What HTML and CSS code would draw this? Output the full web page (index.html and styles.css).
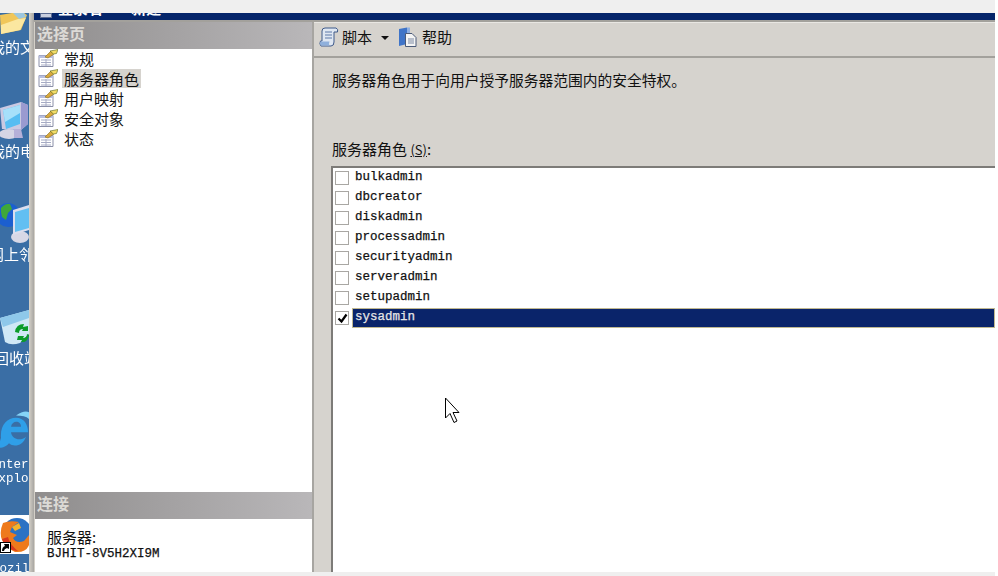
FILE: index.html
```html
<!DOCTYPE html>
<html lang="zh-CN">

<head>
    <meta charset="UTF-8">
    <title>登录名 - 新建</title>
    <link rel="stylesheet" href="styles.css">
</head>

<body>
    <svg width="0" height="0" class="defs">
        <symbol id="page-icon" viewBox="0 0 20 18">
            <path d="M1 6.500h14v11H1z" fill="#fff" stroke="#8a8fa8"/>
            <path d="M1 6.500h14v2.500H1z" fill="#b9bfe0"/>
            <path d="M3 11h10M3 13.500h10M3 16h10M8 10v7" stroke="#a6abc4" fill="none"/>
            <path d="M7 8l6-6 3 3-6 4z" fill="#d8a83c" stroke="#8a6d20" stroke-width=".6"/>
            <path d="M12 2l8-1.500-1.500 4-3 .500z" fill="#f3dc66" stroke="#55651f" stroke-width=".6"/>
        </symbol>
    </svg>

    <div class="top-strip"></div>

    <div class="screen">
        <div class="desktop">
            <svg class="desk-icon folder-icon" width="29" height="21" viewBox="0 0 29 21">
                <path d="M0 2L12 0h12l3 2-6 15L1 21z" fill="#f0c659"/>
                <path d="M1 12l17-6 8-1-6 12L1 21z" fill="#fbe7a0"/>
                <path d="M13 0h11l2 4-7 2z" fill="#9cc7df"/>
            </svg>
            <div class="desk-label label-docs">我的文档</div>

            <svg class="desk-icon pc-icon" width="29" height="42" viewBox="0 0 29 42">
                <ellipse cx="9" cy="33" rx="10" ry="5" fill="#d5d5e4"/>
                <path d="M0 7L21 1l7 3v19l-7 6L2 28z" fill="#c9c9e2"/>
                <path d="M3 9l17-5v19L6 28z" fill="#56bdf2"/>
                <path d="M3 9l17-5v8L5 21z" fill="#a6e0fa"/>
                <path d="M21 1l7 3v19l-7 6z" fill="#9a9ad0"/>
                <path d="M14 28h7l2 9h-9z" fill="#b5b0d8"/>
            </svg>
            <div class="desk-label label-pc">我的电脑</div>

            <svg class="desk-icon net-icon" width="29" height="42" viewBox="0 0 29 42">
                <circle cx="8" cy="13" r="12" fill="#1c5fd0"/>
                <path d="M1 6q5-5 9-4l2 5-4 4-2 7-4-3-1-5z" fill="#3fa83a"/>
                <ellipse cx="20" cy="35" rx="9" ry="6" fill="#d8d8e6"/>
                <path d="M13 8l16-5v25l-16 5z" fill="#dcdeee"/>
                <path d="M15 10l14-4v20l-14 4z" fill="#62bff2"/>
            </svg>
            <div class="desk-label label-net">网上邻居</div>

            <svg class="desk-icon bin-icon" width="29" height="36" viewBox="0 0 29 36">
                <path d="M0 8L29 0v24l-9 9q-9 3-15-1z" fill="#cfe8f6"/>
                <path d="M0 8l29-8v8L3 17z" fill="#8ec8ea"/>
                <path d="M15 22q1-8 9-8l-1 3 5-1v5l-6 0 1-2q-4 0-4 4zM18 26l6 0-1 2q4 0 4-4l2 1q-1 8-8 7l1-2-5 0z" fill="#0b9c2a"/>
            </svg>
            <div class="desk-label label-bin">回收站</div>

            <svg class="desk-icon ie-icon" width="29" height="40" viewBox="0 0 29 36" preserveAspectRatio="none">
                <path d="M1 25C0 14 7 7 16 7c8 0 12 6 12 13H11c1 7 10 8 15 4-3 8-12 10-17 6-2 2-5 4-8 4s-1-6 0-9z" fill="#2f9fe8"/>
                <path d="M11 15h10c0-6-9-6-10 0z" fill="#3a6ea5"/>
                <path d="M16 5q8-5 13-3v6q-4-3-13-3z" fill="#85d4f7"/>
            </svg>
            <div class="desk-label mono label-ie1">Internet</div>
            <div class="desk-label mono label-ie2">Explorer</div>

            <div class="fox-tile">
                <svg width="29" height="38" viewBox="0 0 29 38">
                    <circle cx="17" cy="18" r="15" fill="#2b72c4"/>
                    <path d="M3 8Q-1 17 2 25t13 12q11 1 14-7V20l-5 6q-8 3-11-3l4-3-7-3 2-5 7-5q-9-2-16 1z" fill="#ee7a1c"/>
                    <path d="M12 12l7-4 2 5-6 3z" fill="#f5b32a"/>
                    <path d="M2 24q4 11 16 12-8-6-10-14z" fill="#d9391e"/>
                </svg>
                <span class="shortcut">
                    <svg width="9" height="9" viewBox="0 0 9 9"><path d="M1 8q0-4 3-5L3 1h5v5L6 5Q3 6 3 8z" fill="#000"/></svg>
                </span>
            </div>
            <div class="desk-label mono label-fox">Mozilla</div>
        </div>

        <div class="window">
            <div class="title-bar">
                <span class="title-icon"></span>
                <span class="title-text">登录名 - 新建</span>
            </div>
            <div class="window-body">
                <div class="side">
                    <div class="side-head">选择页</div>
                    <ul class="page-list">
                        <li><svg class="page-icon"><use href="#page-icon"/></svg><span>常规</span></li>
                        <li class="current"><svg class="page-icon"><use href="#page-icon"/></svg><span>服务器角色</span></li>
                        <li><svg class="page-icon"><use href="#page-icon"/></svg><span>用户映射</span></li>
                        <li><svg class="page-icon"><use href="#page-icon"/></svg><span>安全对象</span></li>
                        <li><svg class="page-icon"><use href="#page-icon"/></svg><span>状态</span></li>
                    </ul>
                    <div class="side-head">连接</div>
                    <div class="conn">
                        <div class="conn-label">服务器:</div>
                        <div class="conn-name">BJHIT-8V5H2XI9M</div>
                    </div>
                </div>

                <div class="main">
                    <div class="toolbar">
                        <svg class="tool-icon" width="20" height="20" viewBox="0 0 20 20">
                            <path d="M3 14V4q0-3 3-3h11q2.500 1 1.500 4H15v10q0 4-3 4H2q-2-2-.500-5z" fill="#dfe7f2" stroke="#3f5a8a"/>
                            <path d="M6 5h7M6 8h7M6 11h7" stroke="#5c78a8" fill="none"/>
                            <path d="M1.500 14.500h9q-1 2 0 4H2q-1.500-2-.500-4z" fill="#8fb0dc"/>
                        </svg>
                        <span>脚本</span>
                        <span class="caret"></span>
                        <svg class="tool-icon help-icon" width="20" height="20" viewBox="0 0 20 20">
                            <path d="M1 2l8-1.500V17l-8 2z" fill="#3f74c8"/>
                            <path d="M9 .500h3V6H9z" fill="#8fb0e2"/>
                            <path d="M7.500 6.500h6.500l4 4v9H7.500z" fill="#f4f4f4" stroke="#4a5a78"/>
                            <path d="M10 12h6M10 14h6M10 16h6" stroke="#7d8aa3" fill="none"/>
                        </svg>
                        <span>帮助</span>
                    </div>
                    <div class="content">
                        <p class="desc">服务器角色用于向用户授予服务器范围内的安全特权。</p>
                        <p class="list-label">服务器角色 <u class="key">(S)</u>:</p>
                        <div class="role-list">
                            <div class="role"><span class="box"></span><span class="role-name">bulkadmin</span></div>
                            <div class="role"><span class="box"></span><span class="role-name">dbcreator</span></div>
                            <div class="role"><span class="box"></span><span class="role-name">diskadmin</span></div>
                            <div class="role"><span class="box"></span><span class="role-name">processadmin</span></div>
                            <div class="role"><span class="box"></span><span class="role-name">securityadmin</span></div>
                            <div class="role"><span class="box"></span><span class="role-name">serveradmin</span></div>
                            <div class="role"><span class="box"></span><span class="role-name">setupadmin</span></div>
                            <div class="role selected">
                                <span class="box">
                                    <svg width="11" height="11" viewBox="0 0 11 11"><path d="M1.500 5.500l3 3 5-7" fill="none" stroke="#000" stroke-width="2.200"/></svg>
                                </span>
                                <span class="role-name">sysadmin</span>
                            </div>
                            <svg class="cursor" width="17" height="28" viewBox="0 0 17 28">
                                <path d="M1.500 1v20l4.500-4.500 4 9 3-1.500-4-8.500h6z" fill="#fff" stroke="#000" stroke-linejoin="round"/>
                            </svg>
                        </div>
                    </div>
                </div>
            </div>
        </div>
    </div>

    <div class="bottom-strip"></div>
</body>

</html>
```

FILE: styles.css
```css
* {
    box-sizing: border-box;
}

html,
body {
    height: 100%;
}

body {
    margin: 0;
    display: flex;
    flex-direction: column;
    overflow: hidden;
    background-color: #ffffff;
    color: #111111;
    font-family: "Noto Sans CJK SC", "Liberation Sans", sans-serif;
    font-size: 15px;
}

.defs {
    position: absolute;
}

.top-strip {
    height: 13px;
    margin-right: 3px;
    background-color: #efefef;
}

.bottom-strip {
    height: 4px;
    margin-right: 3px;
    background-color: #efefef;
}

/* the source is a rescaled screenshot, everything in it is a little soft */
.screen {
    flex: 1;
    display: flex;
    min-height: 0;
    filter: blur(.35px);
}

/* desktop behind the window, icons sit where they sit */
.desktop {
    position: relative;
    width: 29px;
    overflow: hidden;
    background-color: #3a6ea5;
}

.desk-icon {
    position: absolute;
    left: 0;
}

.folder-icon { top: 0; }
.pc-icon { top: 88px; }
.net-icon { top: 189px; }
.bin-icon { top: 297px; }
.ie-icon { top: 397px; }

.desk-label {
    position: absolute;
    color: #ffffff;
    font-size: 15px;
    line-height: 16px;
    white-space: nowrap;
}

.desk-label.mono {
    font-family: "Liberation Mono", monospace;
    font-size: 12.5px;
}

.label-docs { top: 26px; left: -10px; }
.label-pc { top: 130px; left: -10px; }
.label-net { top: 233px; left: -11px; }
.label-bin { top: 337px; left: -6px; }
.label-ie1 { top: 444px; left: -9px; }
.label-ie2 { top: 458px; left: -9px; }
.label-fox { top: 548px; left: -8px; }

.fox-tile {
    position: absolute;
    top: 502px;
    left: 0;
    width: 29px;
    height: 39px;
    background-color: #ffffff;
}

.fox-tile > svg {
    display: block;
}

.shortcut {
    position: absolute;
    left: 0;
    bottom: 1px;
    display: flex;
    align-items: center;
    justify-content: center;
    width: 11px;
    height: 11px;
    background-color: #ffffff;
    border: 1px solid #000000;
}

.window {
    flex: 1;
    display: flex;
    flex-direction: column;
    min-width: 0;
    margin-right: 3px;
    padding-left: 5px;
    background: linear-gradient(to right, #d4d0c8, #a8a6a2);
    background-size: 5px 100%;
    background-repeat: no-repeat;
}

.title-bar {
    display: flex;
    height: 7px;
    overflow: hidden;
    padding-left: 6px;
    background-color: #05256a;
}

.title-icon {
    width: 12px;
    height: 5px;
    margin-right: 6px;
    background-color: #c9cfdf;
    border: 1px solid #5a6a90;
}

.title-text {
    margin-top: -13px;
    color: #ffffff;
    font-size: 15px;
    font-weight: bold;
    line-height: 16px;
    white-space: pre;
    word-spacing: 8px;
}

.window-body {
    flex: 1;
    display: flex;
    min-height: 0;
    border-top: 2px solid #a3a19c;
}

.side {
    width: 280px;
    display: flex;
    flex-direction: column;
    background-color: #ffffff;
    border-right: 2px solid #a7a5a1;
    border-left: 1px solid #d4d0c8;
}

.side-head {
    height: 27px;
    padding-left: 2px;
    background: linear-gradient(to right, #8f8d8d, #b9b7b9);
    color: #dcdad6;
    font-size: 16px;
    font-weight: bold;
    line-height: 22px;
}

.page-list {
    flex: 1;
    margin: 0;
    padding: 0 0 0 3px;
    list-style: none;
}

.page-list li {
    display: flex;
    align-items: center;
    height: 20px;
    padding-bottom: 2px;
}

.page-icon {
    width: 20px;
    height: 18px;
    margin-right: 4px;
    flex: none;
}

.page-list span {
    padding: 0 2px;
    line-height: 19px;
}

.page-list .current span {
    background-color: #d6d3ce;
}

.conn {
    height: 53px;
    padding: 9px 0 0 12px;
}

.conn-label {
    height: 19px;
    line-height: 17px;
}

.conn-name {
    font-family: "Liberation Mono", monospace;
    font-size: 12.5px;
    line-height: 14px;
    -webkit-text-stroke: .25px;
}

.main {
    flex: 1;
    display: flex;
    flex-direction: column;
    min-width: 0;
    background-color: #d6d3ce;
    border-top: 1px solid #e9e7e3;
}

.toolbar {
    display: flex;
    align-items: center;
    height: 35px;
    padding: 0 0 6px 5px;
    border-bottom: 2px solid #a3a19c;
}

.tool-icon {
    flex: none;
    margin-right: 3px;
}

.help-icon {
    margin-right: 4px;
}

.caret {
    width: 0;
    height: 0;
    margin: 2px 9px 0 9px;
    border-left: 4px solid transparent;
    border-right: 4px solid transparent;
    border-top: 4px solid #111111;
}

.content {
    flex: 1;
    display: flex;
    flex-direction: column;
    min-height: 0;
    padding-left: 17px;
}

.desc {
    margin: 0;
    height: 82px;
    padding: 12px 0 0 1px;
    font-size: 14.75px;
    line-height: 20px;
}

.list-label {
    margin: 0;
    height: 26px;
    padding-left: 1px;
    line-height: 18px;
}

.key {
    font-size: 13px;
}

.role-list {
    position: relative;
    flex: 1;
    padding: 0 0 0 2px;
    background-color: #ffffff;
    border: 2px solid #7d7b78;
    border-right: none;
    border-bottom: none;
}

.role {
    display: flex;
    align-items: center;
    height: 20px;
    font-family: "Liberation Mono", monospace;
    font-size: 12.5px;
    color: #111111;
    -webkit-text-stroke: .25px;
}

.box {
    display: flex;
    align-items: center;
    justify-content: center;
    flex: none;
    width: 14px;
    height: 14px;
    margin-right: 3px;
    background-color: #ffffff;
    border: 1px solid #a9a7a3;
}

.role-name {
    flex: 1;
    height: 20px;
    padding-left: 3px;
    line-height: 19px;
}

.selected .role-name {
    padding-left: 2px;
    background-color: #0a246a;
    color: #e6e6e6;
    border: 1px solid #c0b890;
    line-height: 17px;
}

.cursor {
    position: absolute;
    left: 111px;
    top: 229px;
}
```
